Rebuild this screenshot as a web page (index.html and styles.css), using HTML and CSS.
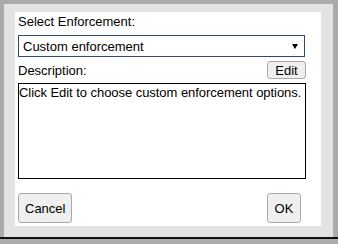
FILE: index.html
```html
<!DOCTYPE html>
<html lang="en">
<head>
  <meta charset="UTF-8" />
  <title>Select Enforcement</title>
  <link rel="stylesheet" href="styles.css">
</head>
<body>

  <div class="screen">
    <div class="frame">
      <div class="panel">

        <!-- ENFORCEMENT -->
        <div class="label">Select Enforcement:</div>
        <div class="select">
          <span>Custom enforcement</span>
          <span class="arrow"></span>
        </div>

        <!-- DESCRIPTION -->
        <div class="desc-row">
          <span class="label">Description:</span>
          <button class="btn btn-small">Edit</button>
        </div>
        <div class="desc">Click Edit to choose custom enforcement options.</div>

        <!-- ACTIONS -->
        <div class="actions">
          <button class="btn btn-big">Cancel</button>
          <button class="btn btn-big ok">OK</button>
        </div>

      </div>
    </div>
  </div>

</body>
</html>
```

FILE: styles.css
```css
body {
  margin: 0;
  background: #ababab;
  font-family: 'Liberation Sans', Arial, sans-serif;
  font-size: 13px;
  color: #000;
  width: 338px;
  height: 244px;
  overflow: hidden;
}
.screen {
  padding: 4px 5px 0 4px;
  border-bottom: 2px solid #111;
}
.frame {
  background: #e3e3e3;
  height: 233px;
  box-sizing: border-box;
  padding: 8px 12px 11px 11px;
}
.panel {
  background: #fff;
  height: 100%;
  box-sizing: border-box;
  padding: 2px 15px 0 3px;
}
.label {
  line-height: 15px;
}
.select {
  margin-top: 6px;
  width: 287px;
  height: 22px;
  box-sizing: border-box;
  border: 1px solid #2a4a7f;
  padding: 0 6px 0 4px;
  display: flex;
  align-items: center;
  justify-content: space-between;
  font-size: 13px;
}
.arrow {
  width: 0;
  height: 0;
  border-left: 3px solid transparent;
  border-right: 3px solid transparent;
  border-top: 5px solid #000;
}
.desc-row {
  margin-top: 4px;
  height: 18px;
  display: flex;
  align-items: center;
  justify-content: space-between;
}
.desc {
  margin-top: 4px;
  height: 96px;
  box-sizing: border-box;
  border: 1px solid #000;
  padding: 1px 0 0 0;
  line-height: 15px;
  white-space: nowrap;
  overflow: hidden;
  letter-spacing: -0.05px;
}
.btn {
  font-family: 'Liberation Sans', Arial, sans-serif;
  font-size: 13px;
  color: #000;
  background: #efefef;
  border: 1px solid #a9a9a9;
  border-radius: 3px;
  padding: 0;
  box-sizing: border-box;
}
.btn-small {
  width: 39px;
  height: 18px;
}
.btn-big {
  height: 30px;
  padding: 0 6px;
}
.actions {
  margin-top: 14px;
  display: flex;
  justify-content: space-between;
}
.ok {
  width: 34px;
  margin-right: 5px;
}
```
